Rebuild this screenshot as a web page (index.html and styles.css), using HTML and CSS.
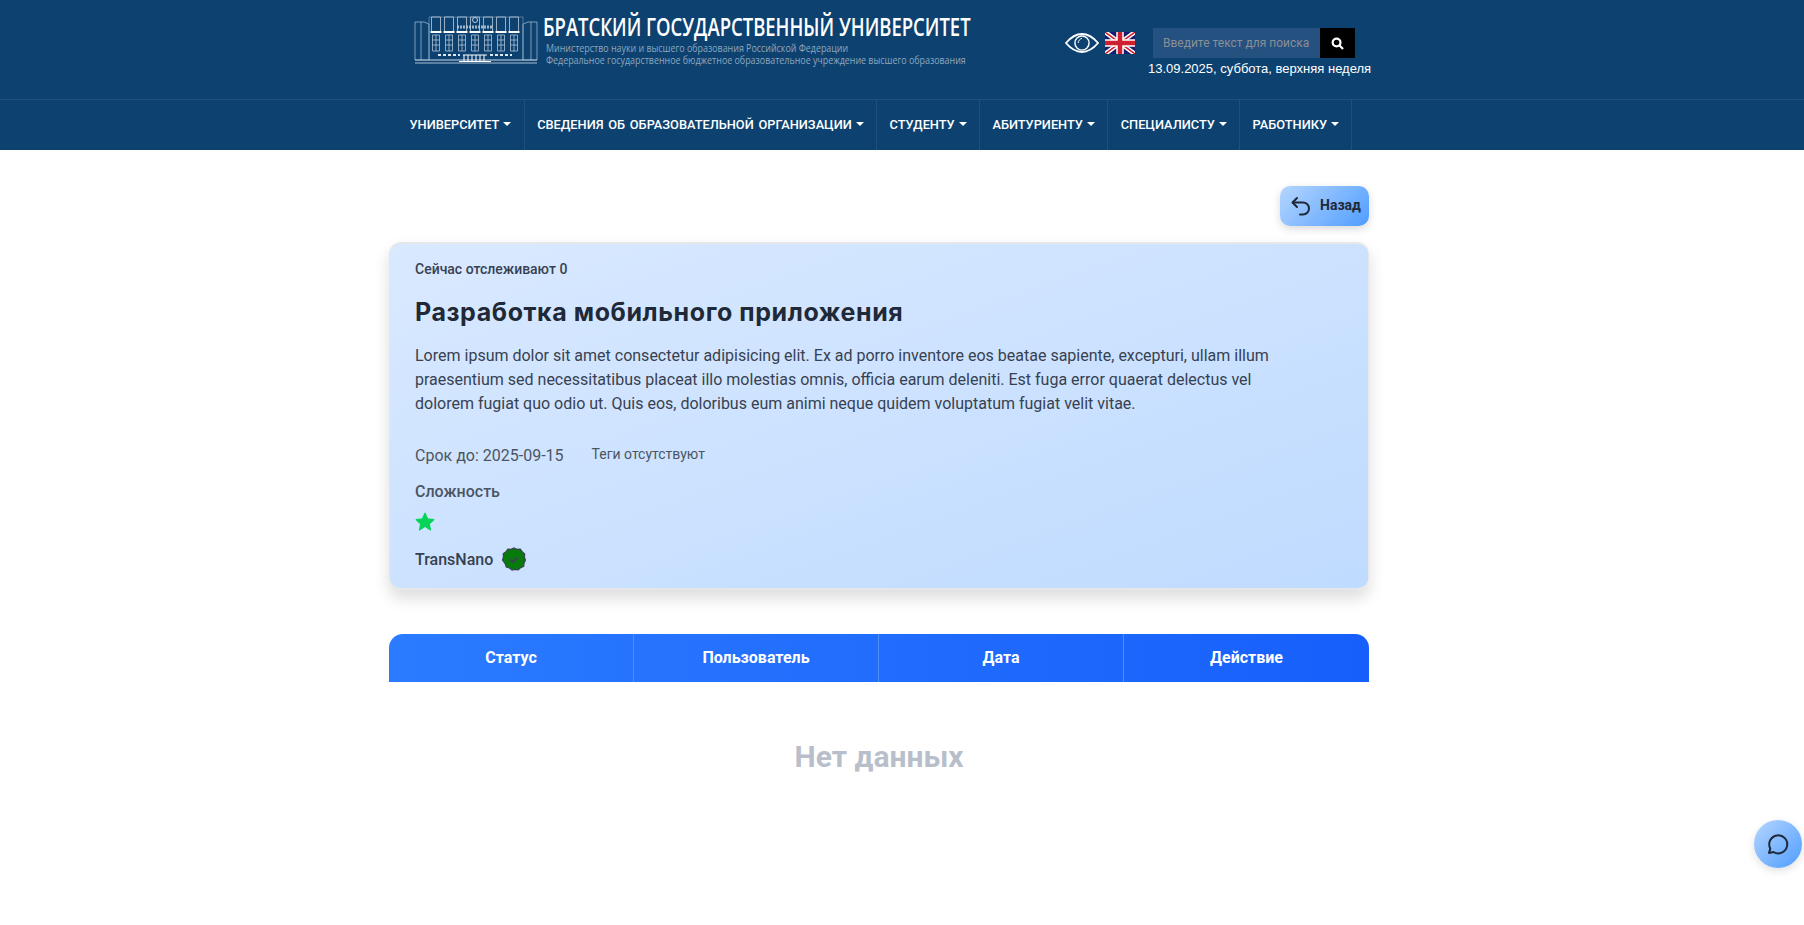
FILE: index.html
```html
<!DOCTYPE html>
<html lang="ru">
<head>
    <meta charset="UTF-8">
    <meta name="viewport" content="width=device-width, initial-scale=1.0">
    <title>Разработка мобильного приложения</title>
    <link rel="stylesheet" href="styles.css">
</head>
<body>
    <header class="site-header">
        <div class="header-top">
            <div class="brand">
                <svg class="brand-logo" viewBox="0 0 124 50" fill="none" stroke="#b9cbdc" stroke-width="1">
                    <defs>
                        <g id="bay">
                            <path d="M0 17V3h9v14" stroke-opacity=".8"/>
                            <path d="M-1 18h11" stroke="#fff" stroke-width="2"/>
                            <path d="M1 21h7v16H1zM4.500 21v16M1 26h7M1 31h7" stroke-opacity=".75"/>
                        </g>
                    </defs>
                    <path d="M1 8h9l5 2v36H1zM123 8h-9l-5 2v36h14zM7 8v38M117 8v38" stroke-opacity=".65"/>
                    <path d="M15 3h94v43H15z" stroke-opacity=".4"/>
                    <path d="M1 46h122M1 49h122" stroke-opacity=".9"/>
                    <use href="#bay" x="17.500"/>
                    <use href="#bay" x="30.500"/>
                    <use href="#bay" x="43.500"/>
                    <use href="#bay" x="56.500"/>
                    <use href="#bay" x="69.500"/>
                    <use href="#bay" x="82.500"/>
                    <use href="#bay" x="95.500"/>
                    <path d="M43 13h36" stroke-width="3" stroke-dasharray="2 1" stroke-opacity=".85"/>
                    <circle cx="61" cy="6" r="2.500"/>
                    <path d="M24 41h22M76 41h22" stroke-width="2" stroke-dasharray="3 2" stroke="#dfe8f0"/>
                    <path d="M49 41h24M50 41v6M54 41v6M58 41v6M62 41v6M66 41v6M70 41v6M45 47.500h32" stroke="#fff"/>
                </svg>
                <div class="brand-text">
                    <div class="brand-title">БРАТСКИЙ ГОСУДАРСТВЕННЫЙ УНИВЕРСИТЕТ</div>
                    <div class="brand-sub">Министерство науки и высшего образования Российской Федерации</div>
                    <div class="brand-sub">Федеральное государственное бюджетное образовательное учреждение высшего образования</div>
                </div>
            </div>
            <div class="header-tools">
                <svg class="eye-icon" viewBox="0 0 36 22" fill="none" stroke="#fff">
                    <path d="M1 11C7 4 12 1.500 18 1.500S29 4 35 11c-6 7-11 9.500-17 9.500S7 18 1 11z" stroke-width="2"/>
                    <circle cx="18" cy="11" r="7.500" stroke-width="1.500"/>
                    <path d="M14 11c0-2.500 1.500-4 4-5" stroke-width="1"/>
                </svg>
                <svg class="flag-icon" viewBox="0 0 60 44">
                    <rect width="60" height="44" fill="#1a1a6e"/>
                    <path d="M0 0l60 44M60 0L0 44" stroke="#fff" stroke-width="9"/>
                    <path d="M0 0l60 44M60 0L0 44" stroke="#cf2030" stroke-width="3"/>
                    <path d="M30 0v44M0 22h60" stroke="#fff" stroke-width="15"/>
                    <path d="M30 0v44M0 22h60" stroke="#cf2030" stroke-width="9"/>
                </svg>
                <div class="search-box">
                    <form class="search-form">
                        <input class="search-input" type="text" placeholder="Введите текст для поиска">
                        <button class="search-btn" type="button" aria-label="Поиск">
                            <svg viewBox="0 0 14 14" width="13" height="13" fill="none" stroke="#fff" stroke-width="2.400">
                                <circle cx="6" cy="6" r="4.200"/>
                                <path d="M9.200 9.200L13 13"/>
                            </svg>
                        </button>
                    </form>
                    <div class="today">13.09.2025, суббота, верхняя неделя</div>
                </div>
            </div>
        </div>
        <nav class="main-nav">
            <a class="nav-item" href="#">УНИВЕРСИТЕТ<span class="caret"></span></a>
            <a class="nav-item" href="#">СВЕДЕНИЯ ОБ ОБРАЗОВАТЕЛЬНОЙ ОРГАНИЗАЦИИ<span class="caret"></span></a>
            <a class="nav-item" href="#">СТУДЕНТУ<span class="caret"></span></a>
            <a class="nav-item" href="#">АБИТУРИЕНТУ<span class="caret"></span></a>
            <a class="nav-item" href="#">СПЕЦИАЛИСТУ<span class="caret"></span></a>
            <a class="nav-item" href="#">РАБОТНИКУ<span class="caret"></span></a>
        </nav>
    </header>

    <main class="content">
        <div class="back-row">
            <button class="back-btn" type="button">
                <svg viewBox="0 0 24 24" width="24" height="24" fill="none" stroke="#1f2937" stroke-width="2" stroke-linecap="round" stroke-linejoin="round">
                    <path d="M8 4L3.500 8.500 8 13"/>
                    <path d="M4 8.500h10a6 6 0 0 1 0 12h-3"/>
                </svg>
                <span class="back-label">Назад</span>
            </button>
        </div>

        <section class="task-card">
            <div class="watchers">Сейчас отслеживают 0</div>
            <h1 class="task-title">Разработка мобильного приложения</h1>
            <p class="task-desc">Lorem ipsum dolor sit amet consectetur adipisicing elit. Ex ad porro inventore eos beatae sapiente, excepturi, ullam illum praesentium sed necessitatibus placeat illo molestias omnis, officia earum deleniti. Est fuga error quaerat delectus vel dolorem fugiat quo odio ut. Quis eos, doloribus eum animi neque quidem voluptatum fugiat velit vitae.</p>
            <div class="task-meta">
                <span class="deadline">Срок до: 2025-09-15</span>
                <span class="tags">Теги отсутствуют</span>
            </div>
            <div class="level-label">Сложность</div>
            <svg class="level-star" viewBox="0 0 24 24" width="20" height="20">
                <path d="M12 1.500l3.200 6.800 7.300.9-5.400 5 1.500 7.300L12 17l-6.600 4.500 1.500-7.300-5.400-5 7.300-.9z" fill="#06d357" stroke="#06d357" stroke-linejoin="round" stroke-width="1.500"/>
            </svg>
            <div class="owner">
                <span>TransNano</span>
                <svg viewBox="0 0 24 24" width="24" height="24">
                    <path d="M12 1l3 1.300 3.300-.1 1.900 2.600 2.500 2.100-.3 3.200L23.500 13l-1.400 3-.4 3.300-3 1.300-2.400 2.300-3.200-.6-3.100.8-2.500-2.100-3.200-.9-1-3.100L.5 13l1-3-.3-3.300L4 4.800l1.800-2.700L9 2.300z" fill="#067a0a" stroke="#3b4256" stroke-width="1.200"/>
                    <path d="M8 12.500l3 2.500 5-5" fill="none" stroke="#3b4256" stroke-width="2"/>
                </svg>
            </div>
        </section>

        <div class="table-head">
            <div class="head-cell">Статус</div>
            <div class="head-cell">Пользователь</div>
            <div class="head-cell">Дата</div>
            <div class="head-cell">Действие</div>
        </div>
        <div class="no-data">Нет данных</div>
    </main>

    <button class="chat-btn" type="button" aria-label="Чат">
        <svg viewBox="0 0 24 24" width="24" height="24" fill="none" stroke="#1f2937" stroke-width="2" stroke-linejoin="round">
            <path d="M3 21l1.300-4.400A9 9 0 1 1 7.500 20z"/>
        </svg>
    </button>
</body>
</html>
```

FILE: styles.css
```css
* {
    box-sizing: border-box;
}

body {
    margin: 0;
    font-family: Roboto, Arial, sans-serif;
    background-color: #fff;
    color: #212529;
}

.site-header {
    background-color: #0d4270;
}

.header-top {
    width: 1170px;
    height: 99px;
    margin-left: 317px;
    padding-left: 97px;
    display: flex;
}

.brand {
    display: flex;
    padding-top: 14px;
    width: 651px;
}

.brand-logo {
    width: 124px;
    height: 50px;
    flex: none;
}

.brand-text {
    margin-left: 5px;
}

.brand-title {
    font-family: "Open Sans", sans-serif;
    font-size: 26px;
    font-weight: 600;
    line-height: 25px;
    color: #fff;
    white-space: nowrap;
    transform: scaleX(0.71);
    transform-origin: left center;
}

.brand-title + .brand-sub {
    margin-top: 3px;
}

.brand-sub {
    font-family: "Open Sans", sans-serif;
    font-size: 10px;
    line-height: 12px;
    margin-left: 3px;
    color: #8fa6bd;
    white-space: nowrap;
    transform: scaleX(0.888);
    transform-origin: left center;
}

.header-tools {
    display: flex;
    align-items: flex-start;
    padding-top: 28px;
}

.eye-icon {
    width: 34px;
    height: 22px;
    margin: 4px 6px 0 0;
}

.flag-icon {
    width: 30px;
    height: 22px;
    margin: 4px 18px 0 0;
}

.search-box {
    width: 210px;
}

.search-form {
    display: flex;
    width: 202px;
}

.search-input {
    width: 167px;
    height: 30px;
    padding: 0 10px;
    border: 0;
    background-color: #24517f;
    font-family: Roboto, sans-serif;
    font-size: 12px;
    color: #fff;
}

.search-input::placeholder {
    color: #8a8f96;
}

.search-btn {
    width: 35px;
    height: 30px;
    padding: 0;
    border: 0;
    background-color: #000;
    display: flex;
    align-items: center;
    justify-content: center;
}

.today {
    margin: 3px 0 0 -5px;
    font-family: "Liberation Sans", Arial, sans-serif;
    font-size: 13px;
    line-height: 16px;
    color: #fff;
    white-space: nowrap;
}

.main-nav {
    height: 51px;
    padding-left: 397px;
    display: flex;
    border-top: 1px solid #1f4f7d;
}

.nav-item {
    display: flex;
    align-items: center;
    height: 50px;
    padding: 0 12.300px 2px 12.500px;
    border-right: 1px solid #1f4f7d;
    font-size: 12.8px;
    font-weight: 500;
    word-spacing: 1.500px;
    color: #fff;
    text-decoration: none;
    white-space: nowrap;
}

.caret {
    margin-left: 4px;
    border-top: 4px solid #fff;
    border-left: 4px solid transparent;
    border-right: 4px solid transparent;
}

.content {
    width: 980px;
    margin-left: 389px;
}

.back-row {
    display: flex;
    justify-content: flex-end;
    padding-top: 36px;
}

.back-btn {
    width: 89px;
    height: 40px;
    padding: 0 0 0 9px;
    display: flex;
    align-items: center;
    gap: 7px;
    border: 0;
    border-radius: 10px;
    background: linear-gradient(135deg, #b6d6ff, #4f9dff);
    box-shadow: 0 3px 8px rgba(0, 0, 0, 0.15);
    font-family: Roboto, sans-serif;
    font-size: 14px;
    font-weight: 700;
    color: #1f2937;
}

.back-label {
    padding-bottom: 2px;
}

.task-card {
    height: 348px;
    margin-top: 16px;
    padding: 15px 25px 0;
    border-style: solid;
    border-color: #e5e7eb;
    border-width: 2px 1px;
    border-radius: 12px;
    background: linear-gradient(to bottom right, #d9e9ff, #bfdbff);
    box-shadow: 0 8px 16px rgba(0, 0, 0, 0.14);
}

.watchers {
    font-size: 14px;
    font-weight: 500;
    line-height: 20px;
    color: #374151;
}

.task-title {
    margin: 17px 0 0;
    font-family: Inter, sans-serif;
    font-size: 25px;
    font-weight: 700;
    letter-spacing: 0.58px;
    line-height: 32px;
    color: #1f2937;
}

.task-desc {
    width: 880px;
    margin: 16px 0 0;
    font-size: 16px;
    line-height: 24px;
    color: #374151;
}

.task-meta {
    display: flex;
    align-items: flex-start;
    gap: 28px;
    margin-top: 28px;
    color: #4b5563;
}

.deadline {
    font-size: 16px;
    line-height: 24px;
}

.tags {
    font-size: 14px;
    line-height: 20px;
}

.level-label {
    margin-top: 12px;
    font-size: 16px;
    font-weight: 500;
    line-height: 24px;
    color: #4b5563;
}

.level-star {
    display: block;
    margin-top: 8px;
}

.owner {
    display: flex;
    align-items: center;
    gap: 9px;
    margin-top: 15px;
    font-size: 16px;
    font-weight: 500;
    color: #374151;
}

.table-head {
    display: grid;
    grid-template-columns: repeat(4, 1fr);
    height: 48px;
    margin-top: 44px;
    border-radius: 14px 14px 0 0;
    background: linear-gradient(90deg, #2b7bff, #175ffb);
    color: #fff;
}

.head-cell {
    display: flex;
    align-items: center;
    justify-content: center;
    padding-bottom: 2px;
    border-right: 1px solid #4d8ff5;
    font-size: 16px;
    font-weight: 700;
}

.head-cell:last-child {
    border-right: 0;
}

.no-data {
    margin-top: 54px;
    font-size: 30px;
    font-weight: 700;
    line-height: 42px;
    text-align: center;
    color: #b8bfcb;
}

.chat-btn {
    position: fixed;
    left: 1754px;
    top: 820px;
    width: 48px;
    height: 48px;
    padding: 0;
    display: flex;
    align-items: center;
    justify-content: center;
    border: 0;
    border-radius: 50%;
    background: linear-gradient(135deg, #b6d6ff, #4f9dff);
    box-shadow: 0 3px 8px rgba(0, 0, 0, 0.12);
}
```
